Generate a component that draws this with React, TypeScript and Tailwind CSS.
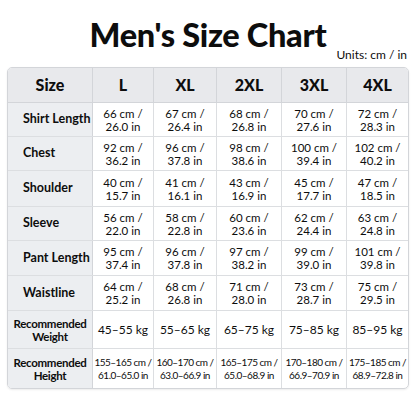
const SIZES = ['L', 'XL', '2XL', '3XL', '4XL'];

const ROWS = [
  { label: 'Shirt Length', h: 'h-[34px]', values: ['66 cm /|26.0 in', '67 cm /|26.4 in', '68 cm /|26.8 in', '70 cm /|27.6 in', '72 cm /|28.3 in'] },
  { label: 'Chest', h: 'h-[34px]', values: ['92 cm /|36.2 in', '96 cm /|37.8 in', '98 cm /|38.6 in', '100 cm /|39.4 in', '102 cm /|40.2 in'] },
  { label: 'Shoulder', h: 'h-[36px]', values: ['40 cm /|15.7 in', '41 cm /|16.1 in', '43 cm /|16.9 in', '45 cm /|17.7 in', '47 cm /|18.5 in'] },
  { label: 'Sleeve', h: 'h-[34px]', values: ['56 cm /|22.0 in', '58 cm /|22.8 in', '60 cm /|23.6 in', '62 cm /|24.4 in', '63 cm /|24.8 in'] },
  { label: 'Pant Length', h: 'h-[35px]', values: ['95 cm /|37.4 in', '96 cm /|37.8 in', '97 cm /|38.2 in', '99 cm /|39.0 in', '101 cm /|39.8 in'] },
  { label: 'Waistline', h: 'h-[35px]', values: ['64 cm /|25.2 in', '68 cm /|26.8 in', '71 cm /|28.0 in', '73 cm /|28.7 in', '75 cm /|29.5 in'] },
];

const WEIGHTS = ['45–55 kg', '55–65 kg', '65–75 kg', '75–85 kg', '85–95 kg'];
const HEIGHTS = [
  '155–165 cm /|61.0–65.0 in',
  '160–170 cm /|63.0–66.9 in',
  '165–175 cm /|65.0–68.9 in',
  '170–180 cm /|66.9–70.9 in',
  '175–185 cm /|68.9–72.8 in',
];

const COLS = 'grid grid-cols-[85px_61px_63px_65px_65px_minmax(0,1fr)]';

function Lines({ text }: { text: string }) {
  const [a, b] = text.split('|');
  return (
    <div className="leading-[13px]">
      <div>{a}</div>
      <div>{b}</div>
    </div>
  );
}

function Sep({ i }: { i: number }) {
  return i < 4 ? 'border-r border-[#dcdee1]' : '';
}

export default function App() {
  return (
    <div className="w-[416px] h-[416px] bg-white font-['Lato',sans-serif] text-[#0d0d0d] overflow-hidden">
      <h1 className="pt-[17px] text-center text-[32.5px] leading-[36px] font-black tracking-[-0.3px]">
        Men's Size Chart
      </h1>
      <div className="flex justify-end pr-[9px] text-[12px] leading-[14px] mt-[-5px]">
        Units: cm / in
      </div>

      <div className="mx-[7px] mt-[5px] border border-[#d3d5d9] rounded-[5px] overflow-hidden shadow-[0_1px_2px_rgba(0,0,0,0.08)]">
        {/* header */}
        <div className={`${COLS} h-[35px] bg-[#e8e9ec] border-b border-[#d3d5d9] text-[16px] font-black`}>
          <div className="flex items-center justify-center border-r border-[#d3d5d9]">Size</div>
          {SIZES.map((s, i) => (
            <div
              key={s}
              className={`flex items-center justify-center ${i < 4 ? 'border-r border-[#d3d5d9]' : ''}`}
            >
              {s}
            </div>
          ))}
        </div>

        {ROWS.map((row) => (
          <div key={row.label} className={`${COLS} ${row.h} border-b border-[#dcdee1]`}>
            <div className="flex items-center pl-[15px] bg-[#eceef1] border-r border-[#d3d5d9] text-[12.5px] font-bold whitespace-nowrap">
              {row.label}
            </div>
            {row.values.map((v, i) => (
              <div
                key={i}
                className={`flex items-center justify-center text-center text-[11.5px] ${Sep({ i })}`}
              >
                <Lines text={v} />
              </div>
            ))}
          </div>
        ))}

        <div className={`${COLS} h-[38px] border-b border-[#dcdee1]`}>
          <div className="flex items-center justify-center text-center bg-[#eceef1] border-r border-[#d3d5d9] text-[11.5px] font-bold leading-[13px] tracking-[-0.3px]">
            <div>
              <div>Recommended</div>
              <div>Weight</div>
            </div>
          </div>
          {WEIGHTS.map((w, i) => (
            <div key={w} className={`flex items-center justify-center text-[12px] ${Sep({ i })}`}>
              {w}
            </div>
          ))}
        </div>

        <div className={`${COLS} h-[39px]`}>
          <div className="flex items-center justify-center text-center bg-[#eceef1] border-r border-[#d3d5d9] text-[11.5px] font-bold leading-[13px] tracking-[-0.3px]">
            <div>
              <div>Recommended</div>
              <div>Height</div>
            </div>
          </div>
          {HEIGHTS.map((v, i) => (
            <div
              key={i}
              className={`flex items-center justify-center text-center text-[10px] tracking-[-0.5px] whitespace-nowrap ${Sep({ i })}`}
            >
              <div className="leading-[13px]">
                <div>{v.split('|')[0]}</div>
                <div>{v.split('|')[1]}</div>
              </div>
            </div>
          ))}
        </div>
      </div>
    </div>
  );
}
